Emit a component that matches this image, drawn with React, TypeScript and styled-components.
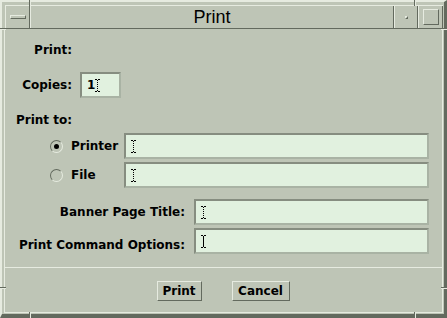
import React from 'react';
import styled, { createGlobalStyle } from 'styled-components';

const BG = '#bec5b6';
const LIGHT = '#e6ebe0';
const DARK = '#636a5e';
const FIELD = '#e1f1df';
const FIELD_DARK = '#868d80';
const FIELD_EDGE = '#a9b3a4';

const GlobalStyle = createGlobalStyle`
  html, body {
    margin: 0;
    padding: 0;
    background: ${BG};
  }
  body {
    font-family: 'DejaVu Sans', 'Liberation Sans', sans-serif;
  }
`;

const Window = styled.div`
  position: relative;
  box-sizing: border-box;
  width: 447px;
  height: 318px;
  background: ${BG};
  border-top: 2px solid ${LIGHT};
  border-left: 2px solid ${LIGHT};
  border-right: 3px solid ${DARK};
  border-bottom: 4px solid ${DARK};
  padding: 3px 1px 1px 2px;
  display: flex;
  flex-direction: column;
`;

const Tick = styled.div<{ $vertical: boolean }>`
  position: absolute;
  width: ${p => (p.$vertical ? '2px' : '6px')};
  height: ${p => (p.$vertical ? '6px' : '2px')};
  background: ${p =>
    p.$vertical
      ? `linear-gradient(to right, ${DARK} 50%, ${LIGHT} 50%)`
      : `linear-gradient(to bottom, ${DARK} 50%, ${LIGHT} 50%)`};
`;

const TitleBar = styled.div`
  display: flex;
  height: 24px;
  box-sizing: border-box;
  border-top: 1px solid ${LIGHT};
  border-bottom: 1px solid ${DARK};
  margin-left: 1px;
`;

const TitleButton = styled.div<{ $w: number }>`
  box-sizing: border-box;
  width: ${p => p.$w}px;
  flex: none;
  border-left: 1px solid ${LIGHT};
  border-right: 1px solid ${DARK};
  display: flex;
  align-items: center;
  justify-content: center;
`;

const MenuGlyph = styled.div`
  width: 16px;
  height: 4px;
  box-sizing: border-box;
  border-top: 1px solid ${LIGHT};
  border-left: 1px solid ${LIGHT};
  border-bottom: 1px solid ${DARK};
  border-right: 1px solid ${DARK};
`;

const MinGlyph = styled.div`
  width: 3px;
  height: 3px;
  box-sizing: border-box;
  border-top: 1px solid ${LIGHT};
  border-left: 1px solid ${LIGHT};
  border-bottom: 1px solid ${DARK};
  border-right: 1px solid ${DARK};
`;

const MaxGlyph = styled.div`
  width: 16px;
  height: 16px;
  box-sizing: border-box;
  border-top: 1px solid ${LIGHT};
  border-left: 1px solid ${LIGHT};
  border-bottom: 1px solid ${DARK};
  border-right: 1px solid ${DARK};
`;

const Title = styled.div`
  flex: 1;
  box-sizing: border-box;
  border-left: 1px solid ${LIGHT};
  border-right: 1px solid ${DARK};
  display: flex;
  align-items: center;
  justify-content: center;
  font-family: 'Liberation Sans', Arial, sans-serif;
  font-size: 18px;
  color: #000;
  padding-top: 1px;
`;

const Content = styled.div`
  flex: 1;
  display: flex;
  flex-direction: column;
  border-left: 1px solid ${LIGHT};
  border-right: 1px solid ${LIGHT};
  border-bottom: 1px solid ${LIGHT};
  padding-top: 12px;
`;

const Row = styled.div<{ $mt: number; $h: number; $pl?: number }>`
  display: flex;
  align-items: center;
  margin-top: ${p => p.$mt}px;
  height: ${p => p.$h}px;
  padding-left: ${p => p.$pl ?? 0}px;
`;

const Label = styled.div<{ $w: number; $gap?: number; $drop?: number }>`
  width: ${p => p.$w}px;
  margin-right: ${p => p.$gap ?? 0}px;
  padding-top: ${p => p.$drop ?? 0}px;
  text-align: right;
  font-size: 12px;
  font-weight: bold;
  color: #000;
  white-space: nowrap;
  flex: none;
`;

const Field = styled.div<{ $w: number }>`
  box-sizing: border-box;
  width: ${p => p.$w}px;
  height: 26px;
  flex: none;
  background: ${FIELD};
  border-top: 2px solid ${FIELD_DARK};
  border-left: 2px solid ${FIELD_DARK};
  border-bottom: 2px solid ${FIELD_EDGE};
  border-right: 2px solid ${FIELD_EDGE};
  display: flex;
  align-items: center;
  padding-left: 5px;
  font-size: 12px;
  font-weight: bold;
  color: #000;
`;

const RadioOption = styled.div`
  width: 74px;
  flex: none;
  display: flex;
  align-items: center;
  gap: 8px;
  font-size: 12px;
  font-weight: bold;
  color: #000;
`;

const RadioCircle = styled.div<{ $on: boolean }>`
  box-sizing: border-box;
  width: 13px;
  height: 13px;
  border-radius: 50%;
  flex: none;
  border: 1px solid;
  border-color: ${DARK} ${LIGHT} ${LIGHT} ${DARK};
  display: flex;
  align-items: center;
  justify-content: center;
  &::after {
    content: '';
    display: ${p => (p.$on ? 'block' : 'none')};
    width: 5px;
    height: 5px;
    border-radius: 50%;
    background: #000;
  }
`;

const Separator = styled.div`
  margin-top: 13px;
  height: 1px;
  background: ${LIGHT};
`;

const ButtonBar = styled.div`
  display: flex;
  justify-content: center;
  gap: 30px;
  padding-top: 13px;
  padding-right: 1px;
`;

const Button = styled.div<{ $w: number }>`
  box-sizing: border-box;
  width: ${p => p.$w}px;
  height: 20px;
  border-top: 1px solid ${LIGHT};
  border-left: 1px solid ${LIGHT};
  border-bottom: 1px solid ${DARK};
  border-right: 1px solid ${DARK};
  display: flex;
  align-items: center;
  justify-content: center;
  font-size: 12px;
  font-weight: bold;
  color: #000;
`;

const Caret = ({ dotted = true }: { dotted?: boolean }) => (
  <svg width="5" height="13" viewBox="0 0 5 13" style={{ display: 'block', flex: 'none' }}>
    <path d="M0 0.5h2M3 0.5h2M0 12.5h2M3 12.5h2" stroke="#000" strokeWidth="1" />
    <line
      x1="2.5"
      y1="1"
      x2="2.5"
      y2="12"
      stroke="#000"
      strokeWidth="1"
      strokeDasharray={dotted ? '1 1' : undefined}
    />
  </svg>
);

const ticks: { x?: number; y?: number; r?: number; b?: number; v: boolean }[] = [
  { x: 27, y: -2, v: true },
  { x: 412, y: -2, v: true },
  { x: 27, b: -4, v: true },
  { x: 412, b: -4, v: true },
  { x: -2, y: 26, v: false },
  { x: -2, y: 285, v: false },
  { r: -3, y: 26, v: false },
  { r: -3, y: 285, v: false },
];

export default function App() {
  return (
    <>
      <GlobalStyle />
      <Window>
        {ticks.map((t, i) => (
          <Tick
            key={i}
            $vertical={t.v}
            style={{ left: t.x, top: t.y, right: t.r, bottom: t.b }}
          />
        ))}
        <TitleBar>
          <TitleButton $w={25}>
            <MenuGlyph />
          </TitleButton>
          <Title>Print</Title>
          <TitleButton $w={24}>
            <MinGlyph />
          </TitleButton>
          <TitleButton $w={25}>
            <MaxGlyph />
          </TitleButton>
        </TitleBar>
        <Content>
          <Row $mt={0} $h={18}>
            <Label $w={67}>Print:</Label>
          </Row>
          <Row $mt={13} $h={26}>
            <Label $w={67} $gap={8}>Copies:</Label>
            <Field $w={41}>
              1<Caret />
            </Field>
          </Row>
          <Row $mt={13} $h={18}>
            <Label $w={67}>Print to:</Label>
          </Row>
          <Row $mt={4} $h={26} $pl={45}>
            <RadioOption>
              <RadioCircle $on />
              Printer
            </RadioOption>
            <Field $w={305}>
              <Caret />
            </Field>
          </Row>
          <Row $mt={3} $h={26} $pl={45}>
            <RadioOption>
              <RadioCircle $on={false} />
              File
            </RadioOption>
            <Field $w={305}>
              <Caret />
            </Field>
          </Row>
          <Row $mt={11} $h={26}>
            <Label $w={180} $gap={9}>Banner Page Title:</Label>
            <Field $w={235}>
              <Caret />
            </Field>
          </Row>
          <Row $mt={3} $h={26}>
            <Label $w={180} $gap={9} $drop={7}>Print Command Options:</Label>
            <Field $w={235}>
              <Caret dotted={false} />
            </Field>
          </Row>
          <Separator />
          <ButtonBar>
            <Button $w={45}>Print</Button>
            <Button $w={58}>Cancel</Button>
          </ButtonBar>
        </Content>
      </Window>
    </>
  );
}
